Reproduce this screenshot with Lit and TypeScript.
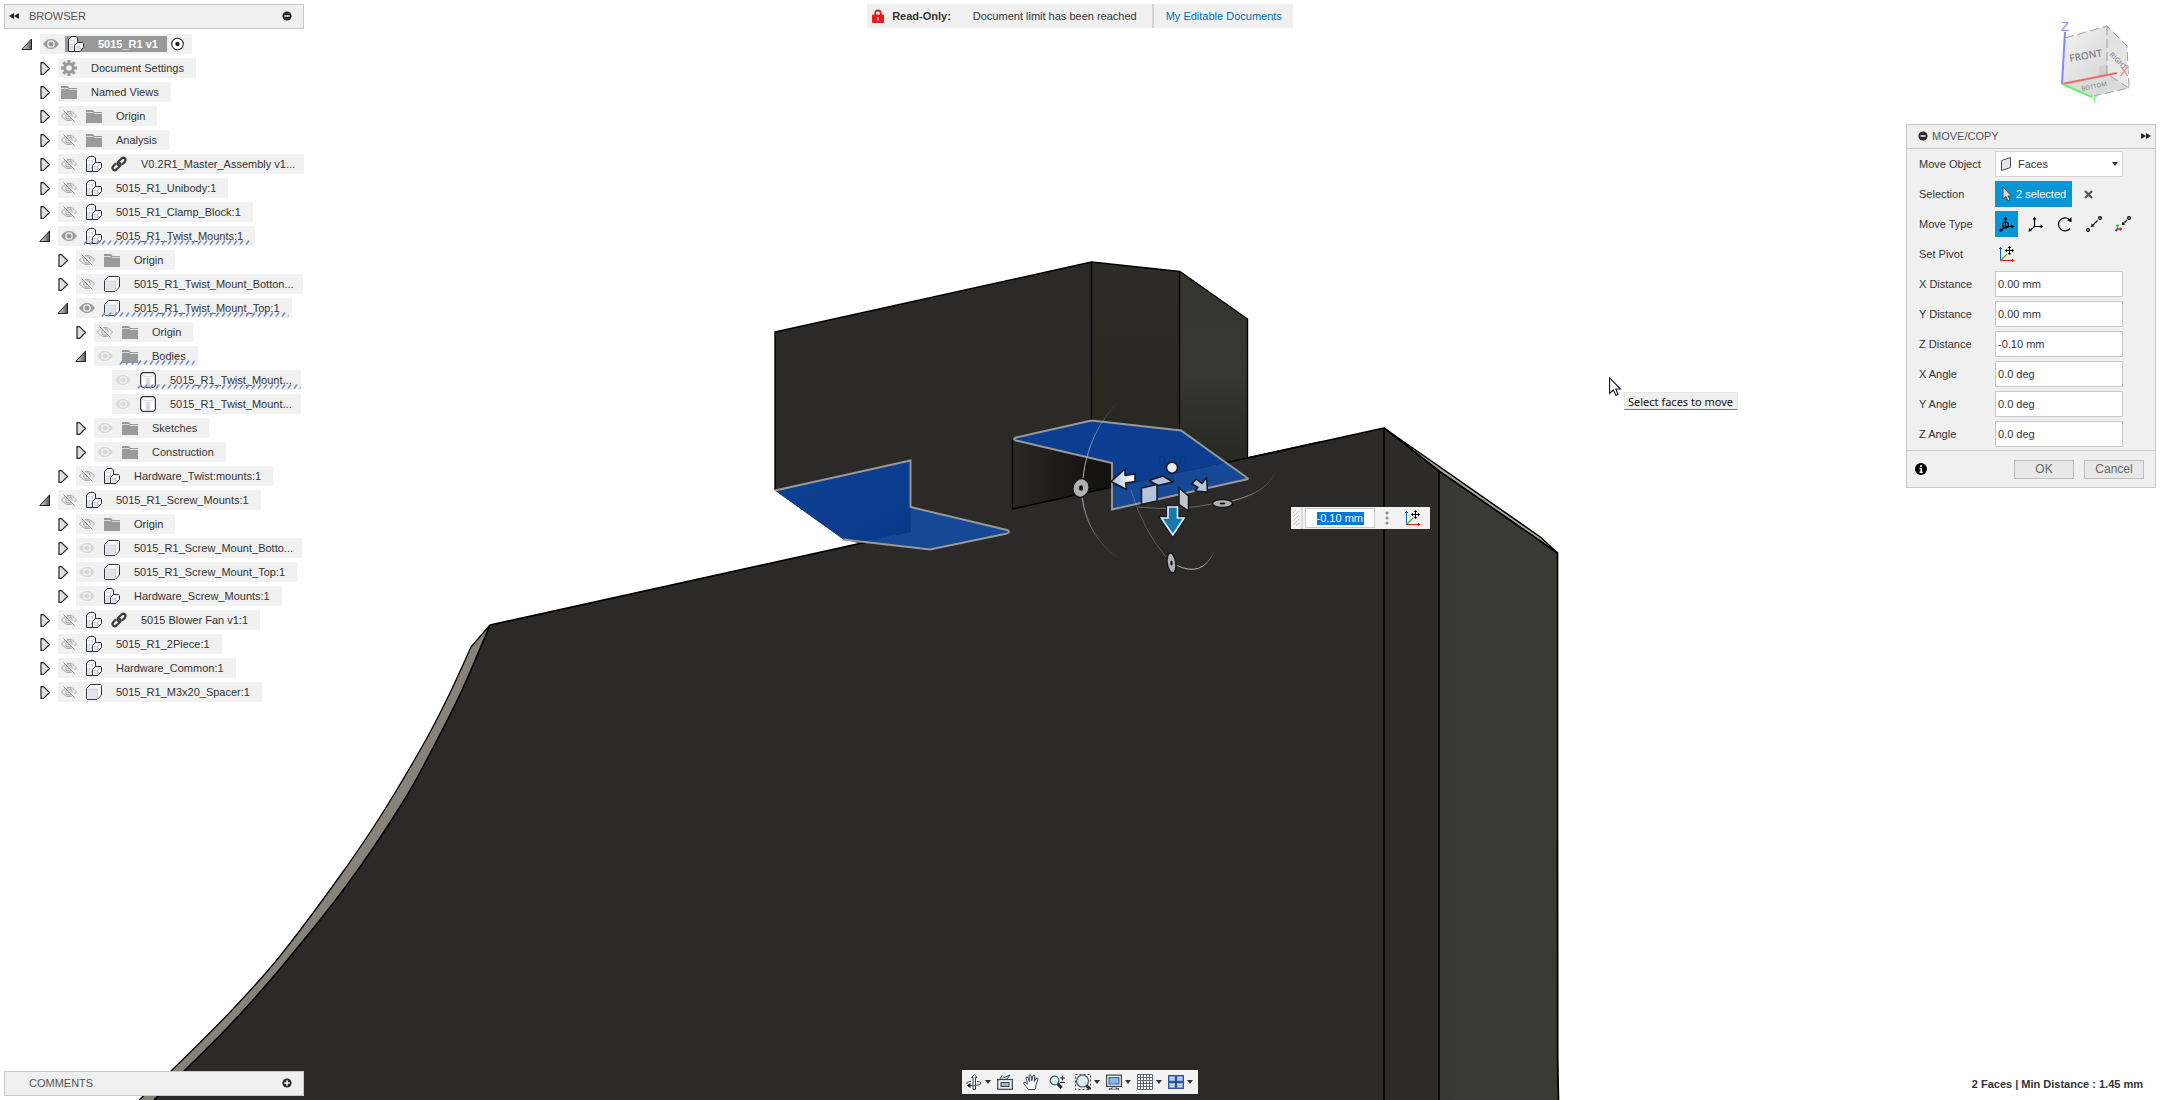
import { LitElement, html, svg, css, nothing } from "lit";
import { customElement } from "lit/decorators.js";
import { classMap } from "lit/directives/class-map.js";

type Eye = "on" | "off" | "dim" | null;
type Kind = "gear" | "folder" | "assembly" | "part" | "body";
interface TreeNode {
  level: number;
  state: "open" | "closed" | "leaf";
  eye: Eye;
  kind: Kind;
  label: string;
  linked?: boolean;
  edited?: boolean;
  root?: boolean;
}

const node = (level: number, state: TreeNode["state"], eye: Eye, kind: Kind, label: string, extra: Partial<TreeNode> = {}): TreeNode =>
  ({ level, state, eye, kind, label, ...extra });

const NODES: TreeNode[] = [
  node(0, "open", "on", "assembly", "5015_R1 v1", { root: true }),
  node(1, "closed", null, "gear", "Document Settings"),
  node(1, "closed", null, "folder", "Named Views"),
  node(1, "closed", "off", "folder", "Origin"),
  node(1, "closed", "off", "folder", "Analysis"),
  node(1, "closed", "off", "assembly", "V0.2R1_Master_Assembly v1...", { linked: true }),
  node(1, "closed", "off", "assembly", "5015_R1_Unibody:1"),
  node(1, "closed", "off", "assembly", "5015_R1_Clamp_Block:1"),
  node(1, "open", "on", "assembly", "5015_R1_Twist_Mounts:1", { edited: true }),
  node(2, "closed", "off", "folder", "Origin"),
  node(2, "closed", "off", "part", "5015_R1_Twist_Mount_Botton..."),
  node(2, "open", "on", "part", "5015_R1_Twist_Mount_Top:1", { edited: true }),
  node(3, "closed", "off", "folder", "Origin"),
  node(3, "open", "dim", "folder", "Bodies", { edited: true }),
  node(4, "leaf", "dim", "body", "5015_R1_Twist_Mount...", { edited: true }),
  node(4, "leaf", "dim", "body", "5015_R1_Twist_Mount..."),
  node(3, "closed", "dim", "folder", "Sketches"),
  node(3, "closed", "dim", "folder", "Construction"),
  node(2, "closed", "off", "assembly", "Hardware_Twist:mounts:1"),
  node(1, "open", "off", "assembly", "5015_R1_Screw_Mounts:1"),
  node(2, "closed", "off", "folder", "Origin"),
  node(2, "closed", "dim", "part", "5015_R1_Screw_Mount_Botto..."),
  node(2, "closed", "dim", "part", "5015_R1_Screw_Mount_Top:1"),
  node(2, "closed", "dim", "assembly", "Hardware_Screw_Mounts:1"),
  node(1, "closed", "off", "assembly", "5015 Blower Fan v1:1", { linked: true }),
  node(1, "closed", "off", "assembly", "5015_R1_2Piece:1"),
  node(1, "closed", "off", "assembly", "Hardware_Common:1"),
  node(1, "closed", "off", "part", "5015_R1_M3x20_Spacer:1"),
];

const icon = (body: unknown, w = 16, h = 16) =>
  html`<svg class="icon" width=${w} height=${h} viewBox="0 0 ${w} ${h}" aria-hidden="true">${body}</svg>`;

const twistyClosed = () => icon(svg`<path d="M2 .6H4.500L10.500 6.500 4.500 12.400H2Z" fill="#dfe2e6" stroke="#222" stroke-width="1.200" stroke-linejoin="round"/>`, 12, 13);
const twistyOpen = () => icon(svg`
  <defs><linearGradient id="tw" x1="0" x2="1"><stop offset="0" stop-color="#f0f0f0"/><stop offset="1" stop-color="#555"/></linearGradient></defs>
  <path d="M10.500 1V11.500H.8Z" fill="url(#tw)" stroke="#222" stroke-width="1" stroke-linejoin="round"/>`, 12, 13);

const eyeOn = (c: string) => icon(svg`
  <path d="M0 8C3 4 5.500 3 8 3S13 4 16 8C13 12 10.500 13 8 13S3 12 0 8Z" fill=${c}/>
  <circle cx="8" cy="8" r="3.200" fill="none" stroke="#f4f4f4" stroke-width="1.300"/>`);
const eyeOff = () => icon(svg`
  <path d="M.5 8C3.500 4.300 5.500 3.500 8 3.500S12.500 4.300 15.500 8C12.500 11.700 10.500 12.500 8 12.500S3.500 11.700 .5 8Z" fill="none" stroke="#a0a0a0"/>
  <circle cx="8" cy="8" r="3.300" fill="none" stroke="#a0a0a0"/><circle cx="8" cy="8" r="1.300" fill="#a0a0a0"/>
  <path d="M3.500 1.900 14.100 12.500" stroke="#f1f1f1" stroke-width="1.200"/><path d="M2.500 2.500 13.500 13.500" stroke="#8c8c8c"/>`);

const kinds: Record<Kind, () => unknown> = {
  gear: () => icon(svg`
    <circle cx="8" cy="8" r="4.300" fill="none" stroke="#999" stroke-width="3"/>
    <path d="M8 0V3M8 13V16M0 8H3M13 8H16M2.300 2.300 4.500 4.500M11.500 11.500 13.700 13.700M2.300 13.700 4.500 11.500M11.500 4.500 13.700 2.300" stroke="#999" stroke-width="3"/>`),
  folder: () => icon(svg`
    <path d="M0 2H7L8.500 4H16V15H0Z" fill="#9a9a9a"/><path d="M0 4.500H7L8 5.500H16" fill="none" stroke="#d9d9d9"/>`),
  assembly: () => icon(svg`
    <path d="M.5 3.500 3 .5H8L9.500 2V6.500H14.500L15.500 7.500V11.500L12 15.500H.5Z" fill="#fdfdff" stroke="#272a33" stroke-linejoin="miter"/>
    <path d="M1.500 9.500H5.500V14.500H1.500ZM8 11H12V14.500H8Z" fill="#dcdee4"/>
    <path d="M6.500 15V9.500L9.500 6.500" fill="none" stroke="#272a33"/>
    <path d="M1.500 8.500H6M1.500 4.200H6.500V8.500M6.500 4.200 8.500 2M7.500 10.500H12V14.500M12 10.500 14.800 7.500" fill="none" stroke="#c3c6cf" stroke-width=".8"/>`),
  part: () => icon(svg`
    <path d="M.5 4.500 4.500 .5H14.500L15.500 1.500V11L11 15.500H1.500L.5 14.500Z" fill="#fff" stroke="#34373f"/>
    <path d="M1.500 5H11V14.600H1.500Z" fill="#e3e4e8"/>
    <path d="M11.500 14.500V5H1.500M11.500 5 15 1.500" fill="none" stroke="#c6c9d0" stroke-width=".8"/>
    <path d="M12 5 15 2V10.500L12 14Z" fill="#f6f6f8"/>`),
  body: () => icon(svg`
    <defs><linearGradient id="cyl" x1="0" x2="1"><stop offset="0" stop-color="#fff"/><stop offset=".5" stop-color="#c9ccd2"/><stop offset="1" stop-color="#fff"/></linearGradient></defs>
    <rect x=".6" y=".6" width="14.800" height="14.800" rx="3.500" fill="#fff" stroke="#34373f" stroke-width="1.200"/>
    <path d="M4.500 6H11.500V14.500H4.500Z" fill="url(#cyl)"/>
    <path d="M1.500 3.500Q8 6 14.500 3.500" fill="none" stroke="#c8cad0" stroke-width=".8"/>`),
};

const linkIcon = () => icon(svg`
  <g fill="none" stroke="#3b3b3b" stroke-width="2.200" stroke-linecap="round">
    <path d="M7.500 9.500Q5.500 7.500 7.500 5.500L10.500 2.500Q12.500 1 14 2.500 15.200 4 13.800 5.800L11.500 8"/>
    <path d="M8.500 6.500Q10.500 8.500 8.500 10.500L5.500 13.500Q3.500 15 2 13.500 .8 12 2.200 10.200L4.500 8"/>
  </g>`);

const disc = (plus: boolean) => icon(svg`
  <circle cx="5" cy="5" r="4.600" fill="#2b2b2b"/><path d=${plus ? "M2.300 5H7.700M5 2.300V7.700" : "M2.500 5H7.500"} stroke="#fff" stroke-width="1.400"/>`, 10, 10);
const chevrons = (right: boolean) => icon(svg`
  <path d=${right ? "M0 1 5 4 0 7ZM5 1 10 4 5 7Z" : "M5 1V7L0 4ZM10 1V7L5 4Z"} fill="#222"/>`, 10, 8);
const caret = () => icon(svg`<path d="M0 1H6L3 5Z" fill="#333"/>`, 6, 6);

const pivotIcon = () => icon(svg`
  <g fill="none" stroke-width="1">
    <path d="M1.500 1V14.500M0 2.500H3" stroke="#1460b0"/>
    <path d="M1.500 14.500 8 8" stroke="#3cb521" stroke-width="1.200"/>
    <path d="M1.500 14.500H15.500M13.500 13V16" stroke="#d7191c"/>
    <path d="M10.500 1V8M7 4.500H14" stroke="#000"/></g>
    <path d="M10.500 0 12.300 2H8.700ZM10.500 9 12.300 7H8.700ZM6 4.500 8 2.700V6.300ZM15 4.500 13 2.700V6.300Z"/>`);

const triad = (free: boolean) => svg`
  <g stroke="#000" stroke-width="1.200" fill="none"><path d="M6.500 2V10.500H14M6.500 10.500 2 14.500"/>${free ? svg`<circle cx="6.500" cy="9" r="3"/>` : nothing}</g>
  <path d="M6.500 .5 8.500 3.500H4.500ZM15.500 10.500 12.500 8.500V12.500ZM.5 15.500 1 12 4 15Z"/>`;
const moveTypes: { name: string; art: unknown }[] = [
  { name: "Free Move", art: triad(true) },
  { name: "Translate", art: triad(false) },
  { name: "Rotate", art: svg`<path d="M13 4.200A6.500 6.500 0 1 0 13 12.500" fill="none" stroke="#000" stroke-width="1.200"/><path d="M14.500 1V6.200L10.300 4.600Z"/>` },
  { name: "Point to Point", art: svg`<g fill="none" stroke="#000" stroke-width="1.200"><circle cx="14" cy="2" r="1.400"/><circle cx="2" cy="14" r="1.400"/><path d="M11.500 4.500 7 9"/></g><path d="M5 11 5.500 7.500 8.500 10.500Z"/>` },
  { name: "Point to Position", art: svg`<g fill="none" stroke="#000" stroke-width="1.200"><circle cx="14" cy="2" r="1.400"/><path d="M12 4 9.500 6.500"/></g><path d="M7 9 7.500 5.500 10.500 8.500Z"/>
      <g fill="none" stroke-width="1.300"><path d="M2.500 8.500V13M1 9.500H4" stroke="#3cb521"/><path d="M2.500 13H7M5.500 11.500V14.500" stroke="#d7191c"/><path d="M2.500 13 .5 15.200" stroke="#1460b0" stroke-width="2"/></g>` },
];

const navTools: { name: string; menu: boolean; art: unknown }[] = [
  { name: "Orbit", menu: true, art: svg`<g fill="none" stroke="#39424e" stroke-width="1"><path d="M7 3.500V15.500H9.500V3.500H11L8.300 .5 5.500 3.500Z" fill="#fff"/><path d="M3 11.500Q9 12.500 13.500 10.500 17.500 8.500 11 7.300M5 7.300Q-1 8 1.500 10"/></g><path d="M.5 11.500 4.500 9V14Z" fill="#111"/>` },
  { name: "Look At", menu: false, art: svg`<path d="M3 5 5 1.500 7 3.500 13 1 10 5" fill="#cfd6dc" stroke="#39424e"/><rect x=".7" y="5.500" width="14.600" height="9.800" fill="#eef0f2" stroke="#39424e" stroke-width="1.200"/><rect x="4" y="8.500" width="8" height="4" fill="#aab3bd" stroke="#39424e"/>` },
  { name: "Pan", menu: false, art: svg`<path d="M5.500 15.500 1 10Q0 8 2 8L4.500 10 3 4Q3 2.500 4.500 3L6.500 7.500 6 1.500Q7 0 8 1.500L8.700 7 10 1.500Q11.300 .5 12 2L11.200 7.500 13.500 4Q15 3.500 15 5L13 11 12 15.500Z" fill="#fff" stroke="#39424e" stroke-linejoin="round"/>` },
  { name: "Zoom", menu: false, art: svg`<path d="M8.500 9.500 12.500 14" stroke="#222a33" stroke-width="3"/><circle cx="5.500" cy="6.500" r="4.300" fill="#dcecef" stroke="#4a5563" stroke-width="1.200"/><path d="M11 4H16M13.500 1.500V6.500M11 8.500H16" stroke="#222" stroke-width="1.200"/>` },
  { name: "Fit", menu: true, art: svg`<rect x=".5" y=".5" width="15" height="15" fill="none" stroke="#444" stroke-dasharray="2 2"/><path d="M10.500 10.500 15 15" stroke="#222a33" stroke-width="3"/><circle cx="7.500" cy="7" r="6" fill="#dcecef" stroke="#4a5563" stroke-width="1.200"/>` },
  { name: "Display Settings", menu: true, art: svg`<rect x=".6" y="1.100" width="14.800" height="11.300" fill="#f5f5f5" stroke="#39424e" stroke-width="1.200"/><rect x="3" y="3.500" width="10" height="6.500" fill="#8fb5ea" stroke="#2e5fa8"/><path d="M6 13V14.500H3.500V16H12.500V14.500H10V13" fill="#cfd3d8" stroke="#39424e" stroke-width=".8"/>` },
  { name: "Grid and Snaps", menu: true, art: svg`<path d="M.5 .5H15.500V15.500H.5ZM3.500 .5V15.500M6.500 .5V15.500M9.500 .5V15.500M12.500 .5V15.500M.5 3.500H15.500M.5 6.500H15.500M.5 9.500H15.500M.5 12.500H15.500" fill="#fff" stroke="#5e6673"/>` },
  { name: "Viewports", menu: true, art: svg`<g fill="#8fb5ea" stroke="#33548c" stroke-width="1.200"><rect x=".6" y="1.600" width="7" height="6"/><rect x="8.400" y="1.600" width="7" height="6"/><rect x=".6" y="8.400" width="7" height="6"/><rect x="8.400" y="8.400" width="7" height="6"/></g><path d="M2.500 3.500H5.500V5.500H2.500ZM10.500 3.500H13.500V5.500H10.500ZM2.500 10.500H5.500V12.500H2.500ZM10.500 10.500H13.500V12.500H10.500Z" fill="none" stroke="#d8e6fa" stroke-width=".8"/>` },
];

const fields: [string, string][] = [
  ["X Distance", "0.00 mm"], ["Y Distance", "0.00 mm"], ["Z Distance", "-0.10 mm"],
  ["X Angle", "0.0 deg"], ["Y Angle", "0.0 deg"], ["Z Angle", "0.0 deg"],
];

/** Smooth curve through a run of points (Catmull-Rom turned into cubic Béziers). */
function spline(p: number[][]): string {
  let d = "";
  for (let i = 0; i < p.length - 1; i++) {
    const a = p[Math.max(i - 1, 0)], b = p[i], c = p[i + 1], e = p[Math.min(i + 2, p.length - 1)];
    d += `C${b[0] + (c[0] - a[0]) / 6} ${b[1] + (c[1] - a[1]) / 6} ${c[0] - (e[0] - b[0]) / 6} ${c[1] - (e[1] - b[1]) / 6} ${c[0]} ${c[1]}`;
  }
  return d;
}
const OUTER = [[471, 647], [448, 697], [423, 745], [380, 817], [340, 876], [280, 956], [233, 1009], [171, 1071], [139, 1100]];
const INNER = [[490, 625], [463, 688], [436, 742], [403, 802], [347, 885], [279, 970], [230, 1025], [184, 1071], [154, 1100]];

@customElement("model-canvas")
export class ModelCanvas extends LitElement {
  static styles = css`
    :host { display: block; }
    .scene { display: block; width: 100%; height: 100%; }
    .ghost { font: 15px "Liberation Sans", Arial, sans-serif; }
  `;
  render() {
    const inner = `M490 625${spline(INNER)}`;
    const outer = `M490 625L471 647${spline(OUTER)}`;
    return html`<svg class="scene" viewBox="0 0 2160 1100" preserveAspectRatio="xMidYMin slice" role="img" aria-label="Fan mount model">
      <defs>
        <linearGradient id="side" x1="0" y1="0" x2="0" y2="1"><stop offset="0" stop-color="#35352f"/><stop offset=".5" stop-color="#363731"/><stop offset="1" stop-color="#272722"/></linearGradient>
        <linearGradient id="mid" x1="0" y1="0" x2="0" y2="1"><stop offset="0" stop-color="#2d2c28"/><stop offset="1" stop-color="#26251f"/></linearGradient>
        <linearGradient id="slot" x1="0" y1="0" x2="1" y2="0"><stop offset="0" stop-color="#292826"/><stop offset=".75" stop-color="#151412"/><stop offset="1" stop-color="#11110f"/></linearGradient>
        <linearGradient id="right" x1="0" y1="0" x2="1" y2="0"><stop offset="0" stop-color="#383833"/><stop offset=".2" stop-color="#3b3b35"/><stop offset="1" stop-color="#3a3a34"/></linearGradient>
        <linearGradient id="arrow" x1="0" x2="1"><stop offset="0" stop-color="#aab9d6"/><stop offset=".5" stop-color="#dde1ea"/><stop offset="1" stop-color="#fff"/></linearGradient>
        <linearGradient id="blue" x1="0" x2="1" y2="1"><stop offset="0" stop-color="#0f4294"/><stop offset="1" stop-color="#07388a"/></linearGradient>
        <linearGradient id="fadeUp" gradientUnits="userSpaceOnUse" x1="0" y1="400" x2="0" y2="470"><stop offset="0" stop-color="#b5b5b2" stop-opacity="0"/><stop offset="1" stop-color="#b5b5b2"/></linearGradient>
        <linearGradient id="fadeDown" gradientUnits="userSpaceOnUse" x1="0" y1="500" x2="0" y2="560"><stop offset="0" stop-color="#b5b5b2"/><stop offset="1" stop-color="#b5b5b2" stop-opacity="0"/></linearGradient>
        <linearGradient id="fadeLow" gradientUnits="userSpaceOnUse" x1="0" y1="550" x2="0" y2="568"><stop offset="0" stop-color="#b5b5b2" stop-opacity="0"/><stop offset="1" stop-color="#b5b5b2"/></linearGradient>
        <linearGradient id="fadeRight" gradientUnits="userSpaceOnUse" x1="1230" y1="0" x2="1277" y2="0"><stop offset="0" stop-color="#b5b5b2"/><stop offset="1" stop-color="#b5b5b2" stop-opacity="0"/></linearGradient>
      </defs>
      <path d="${outer}L154 1100${spline([...INNER].reverse())}Z" fill="#86847a"/>
      <path d="M1384 428 1541 537.500 1557.500 553 1439 471Z" fill="#a9a99d" stroke="#000" stroke-width="1.500"/>
      <path d="${inner}H1384V428Z" fill="#2b2a28"/>
      <path d="M1384 428 1439 471V1100H1384Z" fill="#2d2c28"/>
      <path d="M1439 471 1557.500 553 1558.500 1100H1439Z" fill="url(#right)"/>
      <g fill="none" stroke="#000" stroke-linejoin="round">
        <path d=${inner} stroke-width="1.600"/><path d=${outer} stroke-width="1.300"/>
        <path d="M490 625 1384 428 1439 471 1557.500 553 1557.500 1058 1558.500 1100" stroke-width="1.700"/>
        <path d="M1384 428V1100M1439 471V1100" stroke-width="1.600"/>
      </g>
      <path d="M775 332 1091.500 262V500L858 543 843 539 775 490Z" fill="#2b2a28"/>
      <path d="M1091.500 262 1180 271.500V500H1091.500Z" fill="url(#mid)"/>
      <path d="M1180 271.500 1247.500 319V458L1180 473Z" fill="url(#side)"/>
      <path d="M1012 509 1247 457.700 1246 520H1012Z" fill="#2b2a28"/>
      <path d="M1012.500 439 1112 463V487L1012.500 509Z" fill="url(#slot)"/>
      <g fill="none" stroke="#000" stroke-width="1.400" stroke-linejoin="round">
        <path d="M775 490V332L1091.500 262 1180 271.500 1247.500 319V458M1091.500 262V421M1179.500 271.500V431M1012.500 439V509L1112 487M1180 472.700 1320 442"/>
      </g>
      <path d="M775 490.500 910.500 460.500V507L1009 531V533L930 549.500 843 539Z" fill="#154895"/>
      <path d="M775 490.500 910.500 460.500V532L858 541 843 539Z" fill="url(#blue)"/>
      <path d="M910 507V532L860 541" fill="none" stroke="#0b3880"/>
      <path d="M775 490.500 910.500 460.500V507L1007 530Q1011 531.500 1007 533.500L930 549.500 843 539.500" fill="none" stroke="#9a9997" stroke-width="1.900"/>
      <path d="M1014 438 1091.500 420.500 1181 430.500 1248 478.500 1112 509.500V463L1014 440.500Z" fill="#154895"/>
      <path d="M1014 438 1091.500 420.500 1181 430.500 1224 461.500 1112 487V463L1014 440.500Z" fill="#0b3e90"/>
      <path d="M1112 487 1224 462.500" stroke="#0b3478" fill="none"/>
      <path d="M1016 437.500 1091.500 420.500 1181 430.500 1246 477Q1250 479 1246 479.500L1112 509.500V463L1016 440.500Q1012 439 1016 437.500Z" fill="none" stroke="#9a9997" stroke-width="1.900"/>
      <text class="ghost" x="1158" y="466" fill="#0b3681">0.10</text>
      <path d="M1172 470V479" stroke="#0b3681"/>
      <g fill="none" stroke-width="1">
        <path d="M1120 400Q1088 432 1083 478" stroke="url(#fadeUp)"/><path d="M1082 497Q1088 540 1122 560" stroke="url(#fadeDown)"/>
        <path d="M1131 490Q1143 530 1166 557" stroke="#a5a5a2" opacity=".4"/><path d="M1176 565Q1202 578 1214 552" stroke="url(#fadeLow)"/>
        <path d="M1138 507Q1180 511 1212 504" stroke="#a5a5a2" opacity=".5"/><path d="M1232 501Q1268 492 1276 471" stroke="url(#fadeRight)"/>
      </g>
      <g stroke="#14181f" stroke-width="1.500" stroke-linejoin="round">
        <g fill="#b0b0b0"><ellipse cx="1081" cy="488" rx="8" ry="9.500" transform="rotate(18 1081 488)"/><ellipse cx="1171.500" cy="563" rx="4.300" ry="10" transform="rotate(-8 1171.500 563)"/><ellipse cx="1222.500" cy="503.500" rx="10" ry="4"/></g>
        <path d="M1111 481.500 1125 469V475.500L1135 474V481.500L1125.500 483 1126.500 489.500Z" fill="url(#arrow)"/>
        <circle cx="1172" cy="467.700" r="5.500" fill="#e9edf3"/>
        <path d="M1149 480.500 1163 476 1173 482 1158 485.500Z" fill="#b5c3dc"/>
        <path d="M1141.500 488 1157 484.500V501L1141.500 504.500Z" fill="#b5c3dc"/>
        <path d="M1179 488 1188.500 496V511L1179 504.500Z" fill="#c3c5ca"/>
        <path d="M1192 484 1196 479 1202 483.500 1206.500 477.500 1207.500 492 1195 491 1198 487.500Z" fill="#b9c6dc"/>
      </g>
      <g fill="#111"><ellipse cx="1081" cy="488" rx="2" ry="2.800"/><ellipse cx="1171.500" cy="563" rx="1.200" ry="2.500"/><ellipse cx="1222.500" cy="503.500" rx="3" ry="1"/></g>
      <path d="M1168 507H1177.500V518H1184L1172.800 535 1161.500 518H1168Z" fill="#157aab" stroke="#0e1c26" stroke-width="3.600"/>
      <path d="M1168 507H1177.500V518H1184L1172.800 535 1161.500 518H1168Z" fill="#157aab" stroke="#e4eaee" stroke-width="1.700"/>
    </svg>`;
  }
}

@customElement("view-cube")
export class ViewCube extends LitElement {
  static styles = css`
    :host { display: block; }
    .cube { display: block; font-family: "Open Sans", sans-serif; }
    .front { font-size: 10px; font-weight: 600; }
    .right { font-size: 7px; font-weight: 600; }
    .bottom { font-size: 6px; font-weight: 600; }
    .axis { font: 13px "Liberation Sans", Arial, sans-serif; }
  `;
  render() {
    return html`<svg class="cube" width="80" height="88" viewBox="0 0 80 88" role="img" aria-label="View cube">
      <defs>
        <linearGradient id="f" x1="0" y1="0" x2="1" y2="1"><stop offset="0" stop-color="#f3f3f3"/><stop offset="1" stop-color="#d6d6d6"/></linearGradient>
        <linearGradient id="r" x1="0" y1="0" x2="0" y2="1"><stop offset="0" stop-color="#dedede"/><stop offset="1" stop-color="#ececec"/></linearGradient>
      </defs>
      <path d="M7 20 49 8V56L4 66Z" fill="url(#f)"/>
      <path d="M49 8 69 28V70L49 56Z" fill="url(#r)"/>
      <path d="M4 66 49 56 71 70 36 78Z" fill="#dadada"/>
      <rect x="41" y="48" width="8" height="9" fill="#cfcfcf"/>
      <path d="M7 20 49 8 69 28 71 70 36 78M49 8V56L71 70" fill="none" stroke="#a0a0a0" stroke-dasharray="9 4"/>
      <text class="front" x="12" y="44" transform="rotate(-10 12 44)" fill="#7d8185">FRONT</text>
      <text class="right" x="51" y="37" transform="rotate(45 51 37)" fill="#8d9093">RIGHT</text>
      <text class="bottom" x="24" y="73" transform="rotate(-12 24 73)" fill="#8d9093">BOTTOM</text>
      <path d="M7 14 4 66" stroke="#8585ff" stroke-width="2"/>
      <path d="M4 66 59 55" stroke="#f06a6a" stroke-width="2"/>
      <path d="M4 66 34 79" stroke="#66f066" stroke-width="2"/>
      <text class="axis" x="3" y="13" fill="#8a8af5">Z</text>
      <text class="axis" x="62" y="58" fill="#f08080">X</text>
      <text class="axis" x="32" y="85" fill="#80f080">Y</text>
    </svg>`;
  }
}

@customElement("app-root")
export class AppRoot extends LitElement {
  static styles = css`
    :host { display: block; font: 11px/20px "Liberation Sans", Arial, sans-serif; color: #333; }
    * { box-sizing: border-box; }
    button, input, select { font: inherit; color: inherit; margin: 0; padding: 0; border: 0; background: none; border-radius: 0; outline: 0; }
    .icon { display: block; flex: none; }
    .app { position: relative; min-height: 100vh; overflow: hidden; background: #fff; display: grid; grid-template-columns: 1fr auto 1fr; grid-template-rows: 1fr auto; padding: 4px; }
    .canvas { position: absolute; inset: 0; }
    .left, .right, .middle, .foot { position: relative; }
    .left { width: 300px; }
    .bar { height: 25px; border: 1px solid #c8c8c8; background: #f0f0f0; display: flex; align-items: center; padding: 0 11px 1px 4px; gap: 10px; color: #555; }
    .bar-title { flex: 1; font: inherit; margin: 0; }
    .foot .bar { width: 300px; padding-left: 24px; }

    .tree { list-style: none; margin: 5px 0 0; padding: 0; display: flex; flex-direction: column; gap: 4px; }
    .node { display: flex; align-items: center; gap: 7px; height: 20px; }
    .twisty { width: 12px; height: 13px; flex: none; }
    .chip { height: 20px; display: flex; align-items: center; gap: 9px; padding: 0 12px 0 3px; background: #f1f1f1; white-space: nowrap; }
    .chip.clipped { padding-right: 9px; }
    .item { position: relative; height: 20px; display: flex; align-items: center; gap: 9px; }
    .name { padding-left: 5px; }
    .hatch { position: absolute; left: -3px; right: -9px; bottom: 1px; height: 5px; }
    .hatch svg { display: block; width: 100%; height: 5px; }
    .chip.root { gap: 6px; padding-right: 8px; }
    .root .item { height: 16px; background: #999; color: #fff; font-weight: bold; padding: 0 9px 0 3px; margin-right: -2px; }

    .middle { display: flex; align-items: flex-start; justify-content: center; }
    .banner { height: 24px; background: #f0f0f0; display: flex; align-items: center; padding: 0 11px 0 5px; }
    .banner strong { margin: 0 22px 0 8px; }
    .banner a { color: #0070b8; text-decoration: none; border-left: 2px solid #d4d4d4; line-height: 24px; margin-left: 15px; padding-left: 12px; }

    .right { justify-self: end; width: 250px; display: flex; flex-direction: column; align-items: flex-end; padding-top: 14px; }
    .cube-slot { padding-right: 18px; margin-bottom: 18px; }
    .panel { width: 250px; border: 1px solid #c8c8c8; background: #f0f0f0; }
    .panel-head { display: flex; align-items: center; gap: 4px; height: 24px; padding: 0 4px 1px 11px; border-bottom: 1px solid #c8c8c8; color: #555; }
    .form { display: grid; grid-template-columns: 76px 128px; gap: 4px 0; padding: 2px 0 3px 12px; align-items: center; }
    .form > * { height: 26px; }
    .form label, .caption { line-height: 26px; }
    .field { width: 128px; height: 26px; border: 1px solid #c8c8c8; background: #fff; padding: 0 2px; }
    .combo { display: grid; align-items: center; }
    .combo > * { grid-area: 1 / 1; }
    .combo select { appearance: none; width: 128px; height: 26px; border: 1px solid #d4d4d4; background: #fff; padding-left: 22px; }
    .combo .face, .combo .drop { z-index: 1; pointer-events: none; }
    .combo .face { margin-left: 3px; }
    .combo .drop { justify-self: end; margin-right: 5px; }
    .inline { display: flex; align-items: center; gap: 12px; }
    .pick { background: #0696d7; color: #fff; height: 26px; width: 77px; display: flex; align-items: center; gap: 4px; padding-left: 7px; white-space: nowrap; }
    .types { display: flex; align-items: center; gap: 6px; }
    .type { width: 23px; height: 26px; display: grid; place-items: center; flex: none; }
    .type.active { background: #0696d7; }
    .pivot { width: 23px; display: grid; place-items: center; }
    .panel-foot { height: 37px; border-top: 1px solid #c8c8c8; display: flex; align-items: center; gap: 10px; padding: 0 11px 0 8px; }
    .panel-foot .info { margin-right: auto; }
    .push { width: 60px; height: 19px; border: 1px solid #bdbdbd; background: #e8e8e8; color: #666; font-size: 12px; line-height: 16px; }

    .foot { align-self: end; }
    .nav { justify-self: center; height: 24px; background: #f2f2f2; display: flex; align-items: center; gap: 6px; padding: 0 5px 0 4px; margin-bottom: 2px; }
    .tool { display: flex; align-items: center; gap: 3px; }
    .tool.plain { padding-right: 4px; }
    .status { justify-self: end; font-weight: bold; padding: 0 13px 2px 0; line-height: 20px; }

    .floating { position: absolute; left: 1291px; top: 507px; height: 22px; background: #f2f2f2; display: flex; align-items: center; padding-right: 9px; }
    .grip { width: 12px; height: 22px; border-right: 2px solid #dcdcdc; margin-right: 2px; display: grid; place-items: center; }
    .value { width: 70px; height: 20px; border: 1px solid #c8c8c8; background: #fff; display: grid; place-items: center; }
    .value input { width: 47px; height: 13px; line-height: 13px; background: #0078d7; color: #fff; }
    .more { margin: 0 16px 0 10px; }
    .pointer { position: absolute; left: 1609px; top: 377px; }
    .tip { position: absolute; left: 1624px; top: 392px; height: 18px; line-height: 17px; padding: 0 4px 0 3px; background: #f0f0f0; border: 1px solid #e4e4e4; border-bottom-color: #777; color: #111; font-family: "Noto Sans", sans-serif; white-space: nowrap; }
  `;

  private eye(e: Eye, label: string) {
    if (!e) return nothing;
    const art = e === "off" ? eyeOff() : eyeOn(e === "on" ? "#999" : "#d8d8d8");
    return html`<button aria-label="Visibility of ${label}">${art}</button>`;
  }

  private row(n: TreeNode) {
    return html`<li class="node" role="treeitem" style="padding-left:${17 + n.level * 18}px">
      ${n.state === "leaf"
        ? html`<span class="twisty"></span>`
        : html`<button class="twisty" aria-label="Toggle ${n.label}">${n.state === "open" ? twistyOpen() : twistyClosed()}</button>`}
      <div class=${classMap({ chip: true, root: !!n.root, clipped: n.label.endsWith("...") })}>
        ${this.eye(n.eye, n.label)}
        <div class="item">
          ${kinds[n.kind]()}
          ${n.linked ? linkIcon() : nothing}
          <span class="name">${n.label}</span>
          ${n.edited ? html`<span class="hatch"><svg aria-hidden="true"><defs><pattern id="h" width="6" height="5" patternUnits="userSpaceOnUse"><path d="M1 4.500 4 .5" stroke="#7f92b8" stroke-width="1.700"/></pattern></defs><rect width="100%" height="5" fill="url(#h)"/></svg></span>` : nothing}
        </div>
        ${n.root ? html`<button aria-label="Activate ${n.label}">${icon(svg`<circle cx="6.500" cy="7" r="5.800" fill="#fff" stroke="#222" stroke-width="1.100"/><circle cx="6.500" cy="7" r="2.200" fill="#222"/>`, 13, 14)}</button>` : nothing}
      </div>
    </li>`;
  }

  render() {
    return html`<div class="app">
      <model-canvas class="canvas"></model-canvas>

      <aside class="left">
        <header class="bar"><button aria-label="Collapse browser">${chevrons(false)}</button><h2 class="bar-title">BROWSER</h2><button aria-label="Minimize browser">${disc(false)}</button></header>
        <ul class="tree" role="tree">${NODES.map((n) => this.row(n))}</ul>
      </aside>

      <div class="middle">
        <div class="banner">
          ${icon(svg`<path d="M3.200 7V4.500A2.800 3 0 0 1 8.800 4.500V7" fill="none" stroke="#e02020" stroke-width="1.800"/><rect y="5.500" width="12" height="8.500" rx="1" fill="#e02020"/><path d="M6 8V11.500" stroke="#f6b0b0" stroke-width="1.400"/>`, 12, 14)}
          <strong>Read-Only:</strong><span>Document limit has been reached</span><a href="#documents">My Editable Documents</a>
        </div>
      </div>

      <aside class="right">
        <div class="cube-slot"><view-cube></view-cube></div>
        <section class="panel">
          <header class="panel-head"><button aria-label="Minimize panel">${disc(false)}</button><h2 class="bar-title">MOVE/COPY</h2><button aria-label="Expand panel">${chevrons(true)}</button></header>
          <div class="form">
            <label for="object">Move Object</label>
            <div class="combo">
              <select id="object"><option>Faces</option></select>
              <span class="face">${icon(svg`<path d="M3.500 4.500 12.500 1.500V11.500L3.500 14.500Z" fill="#e4e7ea" stroke="#4b4f55"/>`)}</span>
              <span class="drop">${caret()}</span>
            </div>
            <span class="caption">Selection</span>
            <div class="inline">
              <button class="pick">${icon(svg`<path d="M1 1V13L4 10.500 6 15 8 14 6 10H9.500Z" fill="#d9d9d9" stroke="#444" stroke-width=".9"/>`, 10, 16)}2 selected</button>
              <button aria-label="Clear selection">${icon(svg`<path d="M1 1 8 8M8 1 1 8" stroke="#555" stroke-width="2.200"/>`, 9, 9)}</button>
            </div>
            <span class="caption">Move Type</span>
            <div class="types">${moveTypes.map((t, i) => html`<button class=${classMap({ type: true, active: i === 0 })} aria-label=${t.name}>${icon(t.art)}</button>`)}</div>
            <span class="caption">Set Pivot</span>
            <button class="pivot" aria-label="Set Pivot">${pivotIcon()}</button>
            ${fields.map(([name, value], i) => html`<label for="f${i}">${name}</label><input class="field" id="f${i}" .value=${value}>`)}
          </div>
          <footer class="panel-foot">
            <button class="info" aria-label="Help">${icon(svg`<circle cx="6" cy="6" r="6"/><path d="M6 2V4M4.500 5.500H6.200V9.300M4.500 9.300H7.600" stroke="#fff" stroke-width="1.500" fill="none"/>`, 12, 12)}</button>
            <button class="push">OK</button><button class="push">Cancel</button>
          </footer>
        </section>
      </aside>

      <div class="foot"><div class="bar"><h2 class="bar-title">COMMENTS</h2><button aria-label="Add comment">${disc(true)}</button></div></div>
      <nav class="foot nav" aria-label="Navigation">${navTools.map((t) => html`<button class=${classMap({ tool: true, plain: !t.menu })} aria-label=${t.name}>${icon(t.art)}${t.menu ? caret() : nothing}</button>`)}</nav>
      <div class="foot status">2 Faces | Min Distance : 1.45 mm</div>

      <div class="floating">
        <span class="grip">${icon(svg`<path d="M1 4 4 1M4 5 7 2M1 8 4 5M4 9 7 6M1 12 4 9M4 13 7 10M1 16 4 13M4 17 7 14" stroke="#ccc" stroke-width=".9"/>`, 8, 18)}</span>
        <span class="value"><input aria-label="Z distance" .value=${"-0.10 mm"}></span>
        <button class="more" aria-label="More">${icon(svg`<circle cx="2" cy="2" r="1.500" fill="#888"/><circle cx="2" cy="7" r="1.500" fill="#888"/><circle cx="2" cy="12" r="1.500" fill="#888"/>`, 4, 14)}</button>
        <button aria-label="Set pivot">${pivotIcon()}</button>
      </div>
      <div class="pointer">${icon(svg`<path d="M.6 .8V16.500L4.300 13 7 18.500 9 17.500 6.800 12H11.500Z" fill="#fff" stroke="#1a1a2a" stroke-width="1.100"/>`, 13, 20)}</div>
      <div class="tip" role="tooltip">Select faces to move</div>
    </div>`;
  }
}
